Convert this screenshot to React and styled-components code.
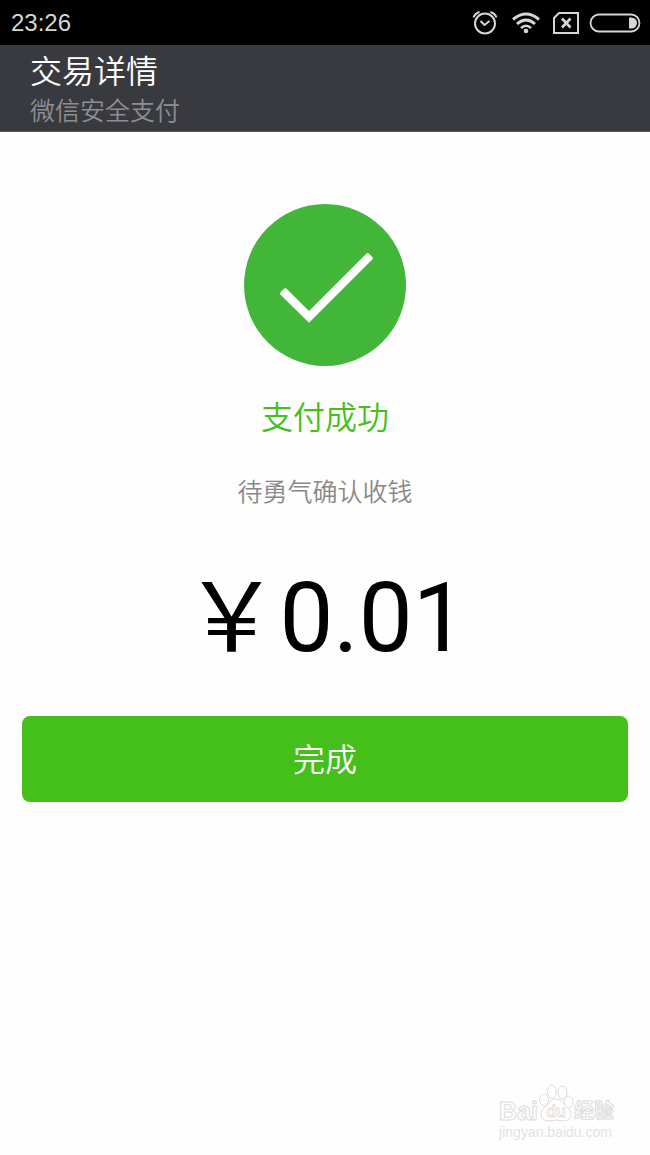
import styled, { createGlobalStyle } from "styled-components";

export default function App() {
  return (
    <>
      <GlobalStyle />
      <Page>
        <StatusBar>
          <time>23:26</time>
          <StatusIcons>
            <AlarmIcon />
            <WifiIcon />
            <NoSimIcon />
            <BatteryIcon />
          </StatusIcons>
        </StatusBar>

        <Header>
          <Title>交易详情</Title>
          <Subtitle>微信安全支付</Subtitle>
        </Header>

        <Content>
          <SuccessIcon />
          <Result>支付成功</Result>
          <Message>待勇气确认收钱</Message>
          <Amount>{"\uFFE5"}0.01</Amount>
          <DoneButton type="button">完成</DoneButton>
        </Content>

        <Watermark />
      </Page>
    </>
  );
}

function AlarmIcon() {
  return (
    <svg width="29" height="26" viewBox="0 0 29 26" fill="none" stroke="#d6d6d6" strokeWidth="2">
      <circle cx="13" cy="13.5" r="10" />
      <path d="M8.5 11L12.5 15L17.5 11" />
      <path d="M1.5 7.5Q3 3.5 7.5 2M24.5 7.5Q23 3.5 18.5 2" />
    </svg>
  );
}

function WifiIcon() {
  return (
    <svg width="30" height="22" viewBox="0 0 30 22" fill="none" stroke="#d6d6d6" strokeWidth="3">
      <path d="M2 7.5Q15 -3.5 28 7.5" />
      <path d="M6 12Q15 4 24 12" />
      <path d="M10 16Q15 11.5 20 16" strokeWidth="2.6" />
      <circle cx="15" cy="19" r="2.3" fill="#d6d6d6" stroke="none" />
    </svg>
  );
}

function NoSimIcon() {
  return (
    <svg width="28" height="22" viewBox="0 0 28 22" fill="none" stroke="#d6d6d6" strokeWidth="2">
      <path d="M8 1H27V21H3V6Z" />
      <path d="M11 6.5L19.5 15.5M19.5 6.5L11 15.5" strokeWidth="2.6" />
    </svg>
  );
}

function BatteryIcon() {
  return (
    <svg width="52" height="20" viewBox="0 0 52 20">
      <rect x="1.5" y="1.5" width="49" height="17" rx="8.5" fill="none" stroke="#d6d6d6" strokeWidth="1.8" />
      <path d="M40 4.5H42.5A5.5 5.5 0 0 1 42.5 15.5H40Z" fill="#d6d6d6" />
    </svg>
  );
}

function SuccessIcon() {
  return (
    <svg width="162" height="162" viewBox="0 0 162 162" aria-hidden="true">
      <circle cx="81" cy="81" r="81" fill="#41b638" />
      <path
        d="M35.8 89.5Q36 88.5 40.5 84.5Q41.5 83.8 42.3 84.5L65 107L122.5 49.5Q123.5 48.5 124.5 49.3L128.5 53.3Q129.3 54.3 128.5 55.3L65 118.8L36.3 90.5Q35.8 90 35.8 89.5Z"
        fill="#fff"
      />
    </svg>
  );
}

function Watermark() {
  return (
    <StyledWatermark>
      <WatermarkLogo>
        <WatermarkName>Bai</WatermarkName>
        <svg width="36" height="40" viewBox="0 0 36 40" fill="#fff" stroke="#dcdcdc">
          <ellipse cx="6" cy="17" rx="4.5" ry="6" />
          <ellipse cx="14" cy="8.5" rx="4.5" ry="6.5" />
          <ellipse cx="24.5" cy="9.5" rx="4.5" ry="6.5" />
          <ellipse cx="30.5" cy="19" rx="4.5" ry="6" />
          <path d="M18 16C12 16 11 22 6 25C1 29 2 38 10 38Q18 36 26 38C34 38 35 29 30 25C25 22 24 16 18 16Z" />
          <text x="18" y="34" textAnchor="middle" fontSize="16" fontWeight="bold" strokeWidth="0.8">
            du
          </text>
        </svg>
        <WatermarkName $small>经验</WatermarkName>
      </WatermarkLogo>
      <WatermarkUrl>jingyan.baidu.com</WatermarkUrl>
    </StyledWatermark>
  );
}

const GlobalStyle = createGlobalStyle`
  * {
    box-sizing: border-box;
  }

  body {
    margin: 0;
    background-color: #fefefe;
    font-family: "Liberation Sans", "Noto Sans CJK SC", sans-serif;
    font-weight: 350;
  }

  h1,
  h2,
  p {
    margin: 0;
    font-weight: 350;
  }

  svg {
    display: block;
    flex-shrink: 0;
  }
`;

const Page = styled.div`
  position: relative;
  min-height: 100vh;
`;

const StatusBar = styled.div`
  display: flex;
  align-items: center;
  justify-content: space-between;
  height: 45px;
  padding: 0 9px 0 11px;
  background-color: #000;
  color: #d6d6d6;
  font-size: 24px;
`;

const StatusIcons = styled.div`
  display: flex;
  align-items: center;
  gap: 10px;
`;

const Header = styled.header`
  padding: 5px 30px 3px;
  background-color: #393a3f;
  border-bottom: 1px solid #56565a;
`;

const Title = styled.h1`
  color: #fff;
  font-size: 32px;
  line-height: 44px;
`;

const Subtitle = styled.p`
  color: #8e8e92;
  font-size: 25px;
  line-height: 34px;
`;

const Content = styled.main`
  display: flex;
  flex-direction: column;
  align-items: center;
  padding: 72px 22px;
`;

const Result = styled.h2`
  margin-top: 28px;
  color: #45c01a;
  font-size: 32px;
  line-height: 48px;
`;

const Message = styled.p`
  margin-top: 32px;
  color: #888;
  font-size: 25px;
  line-height: 36px;
`;

const Amount = styled.p`
  margin-top: 52px;
  color: #000;
  font-family: Roboto, "Noto Sans CJK SC", sans-serif;
  font-size: 96px;
  font-weight: 400;
  line-height: 112px;
`;

const DoneButton = styled.button`
  width: 100%;
  height: 86px;
  margin-top: 42px;
  padding: 0 16px 4px;
  border: none;
  border-radius: 8px;
  background-color: #45c01a;
  color: #fff;
  font: inherit;
  font-size: 32px;
  cursor: pointer;
`;

const StyledWatermark = styled.div`
  position: absolute;
  right: 36px;
  bottom: 14px;
  color: #fff;
  font-weight: bold;
`;

const WatermarkLogo = styled.div`
  display: flex;
  align-items: flex-end;
`;

const WatermarkName = styled.span`
  font-size: ${({ $small }) => ($small ? "20px" : "25px")};
  line-height: 24px;
  -webkit-text-stroke: 1px #dcdcdc;
`;

const WatermarkUrl = styled.p`
  color: #e2e2e2;
  font-size: 14px;
  line-height: 18px;
`;
